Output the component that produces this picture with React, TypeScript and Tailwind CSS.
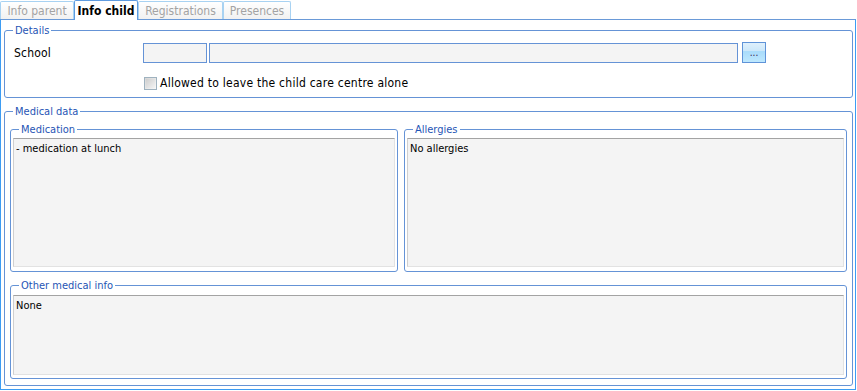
import React from "react";

const FONT = { fontFamily: '"DejaVu Sans Condensed", "DejaVu Sans", Tahoma, sans-serif' };

function Group({
  label,
  className,
  children,
}: {
  label: string;
  className?: string;
  children?: React.ReactNode;
}) {
  return (
    <div className={"relative border border-[#6593d6] rounded-[3px] " + (className ?? "")}>
      <span className="absolute left-[8px] -top-[7px] bg-white px-[2px] text-[11px] leading-[14px] text-[#1f55b5]">
        {label}
      </span>
      {children}
    </div>
  );
}

function Memo({ text, className }: { text: string; className?: string }) {
  return (
    <div
      className={
        "bg-[#f4f4f4] border border-t-[#a3a3a3] border-l-[#cfcfcf] border-r-[#e2e2e2] border-b-[#e2e2e2] px-[2px] pt-[3px] text-[11px] leading-[14px] text-black " +
        (className ?? "")
      }
    >
      {text}
    </div>
  );
}

export default function App() {
  const tabs = [
    { label: "Info parent", w: "w-[74px]", active: false },
    { label: "Info child", w: "w-[64px]", active: true },
    { label: "Registrations", w: "w-[85px]", active: false },
    { label: "Presences", w: "w-[68px]", active: false },
  ];
  return (
    <div className="w-[857px] h-[391px] bg-white overflow-hidden flex flex-col" style={FONT}>
      {/* tab strip */}
      <div className="flex items-end h-[19px] relative z-10">
        {tabs.map((t) =>
          t.active ? (
            <div
              key={t.label}
              className={`${t.w} h-[20px] -mb-[1px] bg-white border border-b-0 border-[#5e9be0] rounded-t-[2px] flex items-center justify-center text-[12px] font-bold text-black`}
            >
              {t.label}
            </div>
          ) : (
            <div
              key={t.label}
              className={`${t.w} h-[18px] bg-[linear-gradient(to_bottom,#ffffff,#f1f1f1)] border border-b-0 border-[#a8d2f2] rounded-t-[2px] flex items-center justify-center text-[12px] text-[#a3a3a3]`}
            >
              {t.label}
            </div>
          )
        )}
      </div>

      {/* panel */}
      <div className="w-[856px] h-[371px] border border-[#3d9cf3] border-t-[#6a9ad8] pl-[3px] pr-[2px] pt-[10px] flex flex-col">
        <Group label="Details" className="h-[68px] shrink-0">
          <div className="flex items-center pt-[12px]">
            <span className="w-[138px] pl-[9px] text-[12px] text-black tracking-[0.2px]">School</span>
            <div className="w-[64px] h-[20px] border border-[#6593d6] bg-[#f4f4f4]" />
            <div className="w-[529px] h-[20px] ml-[2px] border border-[#6593d6] bg-[#f4f4f4]" />
            <div className="w-[24px] h-[21px] ml-[4px] -mt-[1px] border border-[#5f93d8] bg-[linear-gradient(to_bottom,#dff0fc_0%,#cde8fa_40%,#a9dcfb_45%,#bee8fe_100%)] flex items-center justify-center text-[10px] leading-none text-[#3a2050]">
              ...
            </div>
          </div>
          <div className="flex items-center pl-[139px] pt-[11px]">
            <div className="w-[13px] h-[13px] border border-[#9fb2bf] bg-[linear-gradient(135deg,#d6d6d6,#f8f8f8)] p-[1px]">
              <div className="w-full h-full bg-[linear-gradient(135deg,#cfcfcf,#f3f3f3)]" />
            </div>
            <span className="ml-[3px] text-[12px] text-black tracking-[0.25px]">
              Allowed to leave the child care centre alone
            </span>
          </div>
        </Group>

        <Group label="Medical data" className="mt-[13px] h-[275px] shrink-0 px-[5px] pt-[17px] pb-[6px] flex flex-col">
          <div className="flex h-[143px] shrink-0 gap-[6px]">
            <Group label="Medication" className="w-[388px] h-full pt-[8px] px-[2px] pb-[4px] flex flex-col">
              <Memo text="- medication at lunch" className="flex-1" />
            </Group>
            <Group label="Allergies" className="flex-1 h-full pt-[8px] px-[2px] pb-[4px] flex flex-col">
              <Memo text="No allergies" className="flex-1" />
            </Group>
          </div>
          <Group label="Other medical info" className="mt-[13px] flex-1 pt-[9px] px-[2px] pb-[3px] flex flex-col">
            <Memo text="None" className="flex-1" />
          </Group>
        </Group>
      </div>
    </div>
  );
}
